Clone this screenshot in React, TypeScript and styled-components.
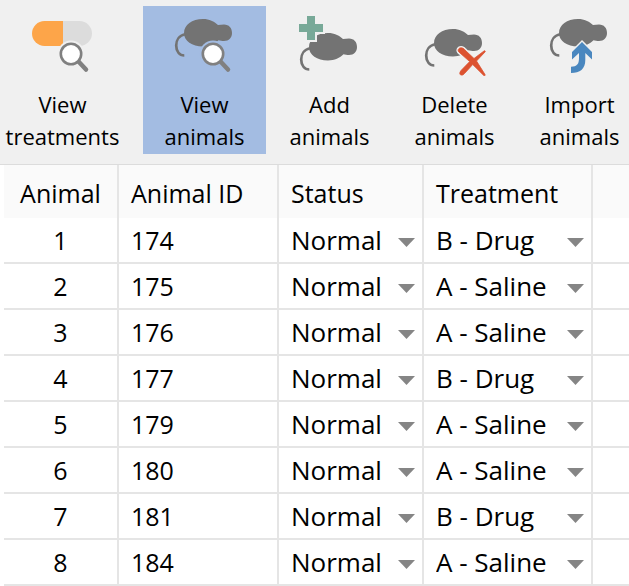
import React, { useState } from "react";
import styled, { createGlobalStyle } from "styled-components";

const BAR = "#f0f0f0";
const SELECTED = "#a3bce2";
const MOUSE = "#737373";

const GlobalStyle = createGlobalStyle`
  *, *::before, *::after { box-sizing: border-box; }
  body {
    margin: 0;
    background: #fff;
    color: #000;
    font-family: "Open Sans", "Noto Sans", sans-serif;
    font-size: 25px;
    line-height: 32px;
    overflow-x: hidden;
  }
`;

const Toolbar = styled.nav`
  display: flex;
  gap: 2px;
  padding: 6px 0 10px 1px;
  background: ${BAR};
  border-bottom: 1px solid #dcdcdc;
  overflow: hidden;
`;

const ToolButton = styled.button<{ $selected: boolean; $spaced?: boolean }>`
  flex: 0 0 123px;
  min-width: 0;
  display: flex;
  flex-direction: column;
  align-items: center;
  gap: 12px;
  margin: 0 ${(p) => (p.$spaced ? 17 : 0)}px 0 0;
  padding: 6px 0 0;
  border: 0;
  --surface: ${(p) => (p.$selected ? SELECTED : BAR)};
  background: var(--surface);
  color: inherit;
  font: inherit;
  font-size: 22px;
  cursor: pointer;
`;

const ToolIcon = styled.svg`
  display: block;
  width: 65px;
  height: 64px;
`;

const ToolLabel = styled.span`
  display: block;
  height: 66px;
  width: min-content;
  text-align: center;
`;

const Grid = styled.table`
  width: calc(100% - 4px);
  margin-left: 4px;
  table-layout: fixed;
  border-collapse: separate;
  border-spacing: 0;
`;

const Column = styled.col<{ $width?: number }>`
  width: ${(p) => (p.$width ? `${p.$width}px` : "auto")};
`;

const HeadCell = styled.th<{ $center?: boolean }>`
  height: 53px;
  padding: 2px 0 0 ${(p) => (p.$center ? 0 : 12)}px;
  border-right: 2px solid #e5e5e5;
  background: #fafafa;
  font-weight: 400;
  text-align: ${(p) => (p.$center ? "center" : "left")};
  white-space: nowrap;
  &:last-child { border-right: 0; }
`;

const Cell = styled.td<{ $center?: boolean }>`
  height: 46px;
  padding: 0 0 0 ${(p) => (p.$center ? 0 : 12)}px;
  border-right: 2px solid #e5e5e5;
  border-bottom: 2px solid #e5e5e5;
  text-align: ${(p) => (p.$center ? "center" : "left")};
  &:last-child { border-right: 0; }
`;

const Picker = styled.div`
  display: grid;
  align-items: center;
`;

const Select = styled.select`
  grid-area: 1 / 1;
  width: 100%;
  height: 44px;
  margin: 0;
  padding: 0;
  border: 0;
  appearance: none;
  background: transparent;
  color: inherit;
  font: inherit;
  font-size: 26px;
`;

const Arrow = styled.svg`
  grid-area: 1 / 1;
  justify-self: end;
  width: 17px;
  height: 9px;
  margin: 4px 7px 0 0;
  fill: #858585;
  pointer-events: none;
`;

const Mouse = ({ y = 0 }: { y?: number }) => (
  <g transform={`translate(0 ${y})`}>
    <path
      fill={MOUSE}
      d="M12 21C12 13 20 7 31 7C37.500 7 42 9.500 46 13C48 12.700 50 12.500 52 12.500C57 12.500 60 16 60 21C60 25.500 57 29 52 29C50 29 48 28.700 46.500 28.300C43 32 37.500 34.500 31 34.500C20 34.500 12 29 12 21Z"
    />
    <path
      fill="none"
      stroke={MOUSE}
      strokeWidth="2.700"
      d="M13 22.300C7 23.500 4.200 28.500 4.200 33.500C4.200 39.500 7.500 43.500 12.300 43.500"
    />
  </g>
);

const Lens = () => (
  <g>
    <circle cx="41" cy="42" r="13.500" fill="var(--surface)" />
    <path d="M48.500 49.500L56 57.500" stroke="#808080" strokeWidth="4.500" strokeLinecap="round" />
    <circle cx="41" cy="42" r="10.200" fill="#fff" stroke="#808080" strokeWidth="2.600" />
  </g>
);

const TreatmentsIcon = () => (
  <>
    <path fill="#fda549" d="M33 9H14.500A12.500 12.500 0 0 0 14.500 34H33Z" />
    <path fill="#dcdcdc" d="M33 9H49.500A12.500 12.500 0 0 1 49.500 34H33Z" />
    <Lens />
  </>
);

const ViewIcon = () => (
  <>
    <Mouse />
    <Lens />
  </>
);

const AddIcon = () => (
  <>
    <Mouse y={14} />
    <path fill="var(--surface)" d="M8 2H20V10H28V22H20V30H8V22H0V10H8Z" />
    <path fill="#78a998" d="M10 4H18V12H26V20H18V28H10V20H2V12H10Z" />
  </>
);

const CROSS =
  "M36 36.500C38 35 40.500 36 42 38L51 46.500L61 39C62 38.300 62.600 39.300 62 40L53.500 49L62 62.500C62.500 63.500 61.500 64.300 60.800 63.500L49.700 52.500L41.500 61.500C39.500 64 37.500 63 37 62.300C36.300 61 37.500 59 38.500 58L46.700 49.600L37 41C35 39.500 34.500 38 36 36.500Z";

const DeleteIcon = () => (
  <>
    <Mouse y={10} />
    <path d={CROSS} transform="translate(1 0)" fill="var(--surface)" stroke="var(--surface)" strokeWidth="3.500" />
    <path d={CROSS} transform="translate(1 0)" fill="#dc5230" stroke="#dc5230" strokeWidth="0.800" />
  </>
);

const UP_ARROW =
  "M35 30L45 40V47.500L38.300 41V48C38.300 57 33 61 24 61V54.700C30 54.700 32 52 32 46V41L25 47.500V40Z";

const ImportIcon = () => (
  <>
    <Mouse />
    <path d={UP_ARROW} fill="var(--surface)" stroke="var(--surface)" strokeWidth="3" />
    <path d={UP_ARROW} fill="#4a87bf" />
  </>
);

const TOOLS = [
  { label: "View treatments", Icon: TreatmentsIcon },
  { label: "View animals", Icon: ViewIcon },
  { label: "Add animals", Icon: AddIcon },
  { label: "Delete animals", Icon: DeleteIcon },
  { label: "Import animals", Icon: ImportIcon },
];

const SALINE = "A - Saline";
const DRUG = "B - Drug";

const ANIMALS = [
  { id: 174, treatment: DRUG },
  { id: 175, treatment: SALINE },
  { id: 176, treatment: SALINE },
  { id: 177, treatment: DRUG },
  { id: 179, treatment: SALINE },
  { id: 180, treatment: SALINE },
  { id: 181, treatment: DRUG },
  { id: 184, treatment: SALINE },
];

const Dropdown = ({ label, value, options }: { label: string; value: string; options: string[] }) => (
  <Picker>
    <Select aria-label={label} defaultValue={value}>
      {options.map((o) => (
        <option key={o}>{o}</option>
      ))}
    </Select>
    <Arrow viewBox="0 0 17 9" aria-hidden="true">
      <path d="M0 0H17L8.500 9Z" />
    </Arrow>
  </Picker>
);

export default function App() {
  const [active, setActive] = useState("View animals");
  return (
    <>
      <GlobalStyle />
      <Toolbar>
        {TOOLS.map(({ label, Icon }, i) => (
          <ToolButton
            key={label}
            type="button"
            $selected={label === active}
            $spaced={i === 0}
            aria-pressed={label === active}
            onClick={() => setActive(label)}
          >
            <ToolIcon viewBox="0 0 65 64" aria-hidden="true">
              <Icon />
            </ToolIcon>
            <ToolLabel>{label}</ToolLabel>
          </ToolButton>
        ))}
      </Toolbar>
      <Grid>
        <colgroup>
          <Column $width={115} />
          <Column $width={160} />
          <Column $width={145} />
          <Column $width={169} />
          <Column />
        </colgroup>
        <thead>
          <tr>
            <HeadCell $center scope="col">Animal</HeadCell>
            <HeadCell scope="col">Animal ID</HeadCell>
            <HeadCell scope="col">Status</HeadCell>
            <HeadCell scope="col">Treatment</HeadCell>
            <HeadCell as="td" />
          </tr>
        </thead>
        <tbody>
          {ANIMALS.map(({ id, treatment }, i) => (
            <tr key={id}>
              <Cell $center>{i + 1}</Cell>
              <Cell>{id}</Cell>
              <Cell>
                <Dropdown label={`Status of animal ${id}`} value="Normal" options={["Normal", "Excluded"]} />
              </Cell>
              <Cell>
                <Dropdown label={`Treatment of animal ${id}`} value={treatment} options={[SALINE, DRUG]} />
              </Cell>
              <Cell />
            </tr>
          ))}
        </tbody>
      </Grid>
    </>
  );
}
